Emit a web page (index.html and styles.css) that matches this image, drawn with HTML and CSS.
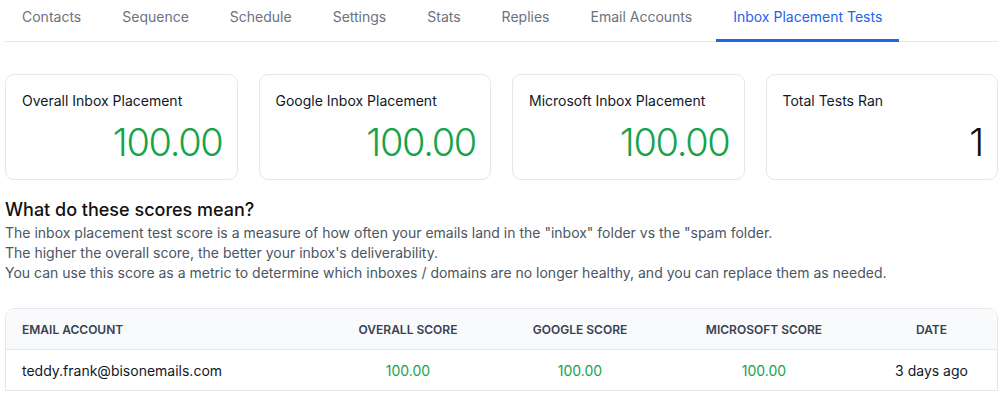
FILE: index.html
```html
<!DOCTYPE html>
<html>
<head>
    <title>Inbox Placement Tests</title>
    <link rel="stylesheet" href="styles.css">
</head>
<body>
    <div class="page">
        <nav class="tabs">
            <a class="tab">Contacts</a>
            <a class="tab">Sequence</a>
            <a class="tab">Schedule</a>
            <a class="tab">Settings</a>
            <a class="tab">Stats</a>
            <a class="tab">Replies</a>
            <a class="tab">Email Accounts</a>
            <a class="tab tab-active">Inbox Placement Tests</a>
        </nav>

        <div class="cards">
            <div class="card">
                <div class="card-title">Overall Inbox Placement</div>
                <div class="card-value green">100.00</div>
            </div>
            <div class="card">
                <div class="card-title">Google Inbox Placement</div>
                <div class="card-value green">100.00</div>
            </div>
            <div class="card">
                <div class="card-title">Microsoft Inbox Placement</div>
                <div class="card-value green">100.00</div>
            </div>
            <div class="card">
                <div class="card-title">Total Tests Ran</div>
                <div class="card-value">1</div>
            </div>
        </div>

        <div class="info">
            <h2>What do these scores mean?</h2>
            <p>The inbox placement test score is a measure of how often your emails land in the "inbox" folder vs the "spam folder.</p>
            <p>The higher the overall score, the better your inbox's deliverability.</p>
            <p>You can use this score as a metric to determine which inboxes / domains are no longer healthy, and you can replace them as needed.</p>
        </div>

        <table class="results">
            <thead>
                <tr>
                    <th class="col-email">Email Account</th>
                    <th class="col-overall">Overall Score</th>
                    <th class="col-google">Google Score</th>
                    <th class="col-microsoft">Microsoft Score</th>
                    <th class="col-date">Date</th>
                </tr>
            </thead>
            <tbody>
                <tr>
                    <td>teddy.frank@bisonemails.com</td>
                    <td class="score">100.00</td>
                    <td class="score">100.00</td>
                    <td class="score">100.00</td>
                    <td class="date">3 days ago</td>
                </tr>
            </tbody>
        </table>
    </div>
</body>
</html>
```

FILE: styles.css
```css
body {
    font-family: Inter, "Noto Sans", sans-serif;
    margin: 0;
    background: white;
    color: #111827;
}

.page {
    padding: 0 8px 0 5px;
}

.tabs {
    display: flex;
    gap: 7px;
    border-bottom: 1px solid #e5e7eb;
    height: 41px;
}

.tab {
    display: block;
    box-sizing: border-box;
    height: 42px;
    margin-bottom: -1px;
    padding: 7px 17px 0;
    font-size: 14px;
    line-height: 20px;
    color: #6b7280;
    cursor: pointer;
}

.tab-active {
    color: #2563eb;
    border-bottom: 3px solid #2563eb;
}

.cards {
    display: grid;
    grid-template-columns: repeat(4, 1fr);
    gap: 21px;
    margin-top: 32px;
}

.card {
    border: 1px solid #e5e7eb;
    border-radius: 9px;
    padding: 16px 14px 15px 16px;
}

.card-title {
    font-size: 14px;
    line-height: 20px;
    color: #111827;
    margin-bottom: 9px;
}

.card-value {
    font-size: 38px;
    font-weight: 300;
    letter-spacing: -0.035em;
    line-height: 44px;
    text-align: right;
    color: #111;
}

.green {
    color: #16a34a;
}

.info {
    margin-top: 18px;
}

.info h2 {
    font-size: 18px;
    font-weight: 500;
    line-height: 24px;
    margin: 0 0 1px;
    color: #111;
}

.info p {
    font-size: 14px;
    line-height: 20px;
    margin: 0;
    color: #4b5563;
}

.results {
    width: 100%;
    margin-top: 25px;
    border-collapse: separate;
    border-spacing: 0;
    border: 1px solid #e5e7eb;
    border-bottom: none;
    border-radius: 9px 9px 0 0;
    overflow: hidden;
}

.results th {
    background: #f9fafb;
    height: 40px;
    padding: 0;
    font-size: 12px;
    font-weight: 600;
    text-transform: uppercase;
    color: #374151;
    text-align: center;
    border-bottom: 1px solid #e5e7eb;
}

.results th.col-email {
    text-align: left;
    padding-left: 16px;
    width: 296px;
}

.col-overall { width: 180px; }
.col-google { width: 164px; }
.col-microsoft { width: 204px; }

.results td {
    height: 40px;
    padding: 0;
    font-size: 14px;
    text-align: center;
    border-bottom: 1px solid #e5e7eb;
    color: #111827;
}

.results td:first-child {
    text-align: left;
    padding-left: 16px;
}

.results td.score {
    color: #16a34a;
}
```
